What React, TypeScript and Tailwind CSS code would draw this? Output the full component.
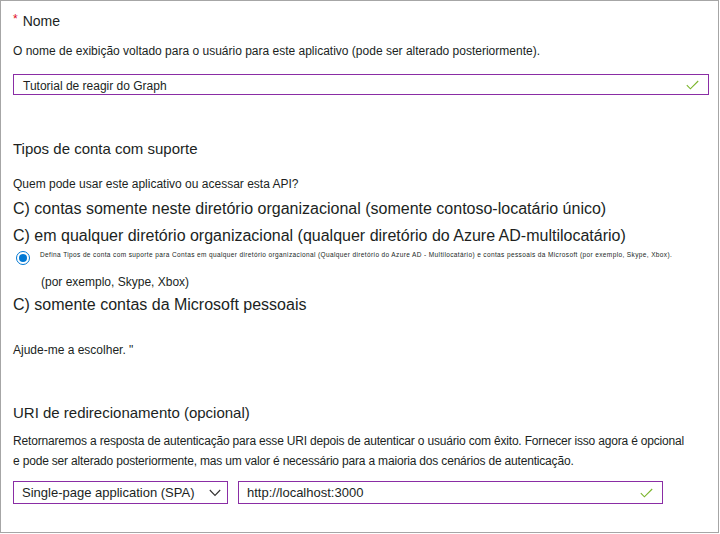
import React from "react";

function Check({ className }: { className?: string }) {
  return (
    <svg className={className} width="13" height="10" viewBox="0 0 13 10" fill="none">
      <path d="M0.8 5.2 L4.4 8.8 L12.2 1" stroke="#7ab42a" strokeWidth="1.1" />
    </svg>
  );
}

function Chevron() {
  return (
    <svg width="12" height="8" viewBox="0 0 12 8" fill="none">
      <path d="M0.8 1 L6 6.4 L11.2 1" stroke="#323130" strokeWidth="1.1" />
    </svg>
  );
}

const ACCOUNT_OPTIONS = [
  "C) contas somente neste diretório organizacional (somente contoso-locatário único)",
  "C) em qualquer diretório organizacional (qualquer diretório do Azure AD-multilocatário)",
];

export default function App() {
  return (
    <div className="h-[534px] w-[720px] bg-white font-['Liberation_Sans',Arial,sans-serif] text-[#201f1e]">
      <div className="h-[533px] w-[719px] border border-[#a6a6a6] pl-[12px]">
        {/* Nome */}
        <div className="mt-[11px] flex items-center text-[14px] leading-[18px]">
          <span className="mr-[5px] -mt-[4px] text-[12px] text-[#e00b1c]">*</span>
          <span>Nome</span>
        </div>
        <p className="mt-[13px] text-[12px] leading-[16px]">
          O nome de exibição voltado para o usuário para este aplicativo (pode ser alterado posteriormente).
        </p>
        <div className="mt-[15px] flex h-[21px] w-[696px] items-center justify-between border border-[#8a2da5] pl-[9px] pr-[9px] text-[12px]">
          <span className="pt-[2px]">Tutorial de reagir do Graph</span>
          <Check />
        </div>

        {/* Tipos de conta */}
        <h2 className="mt-[44px] text-[15px] leading-[20px]">Tipos de conta com suporte</h2>
        <p className="mt-[17px] text-[12px] leading-[16px]">Quem pode usar este aplicativo ou acessar esta API?</p>
        <p className="mt-[4px] text-[16px] leading-[26px]">{ACCOUNT_OPTIONS[0]}</p>
        <p className="text-[16px] leading-[28px]">{ACCOUNT_OPTIONS[1]}</p>
        <div className="flex h-[16px] items-center">
          <span className="ml-[3px] flex h-[14px] w-[14px] shrink-0 items-center justify-center rounded-full border border-[#0078d4]">
            <span className="h-[8px] w-[8px] rounded-full bg-[#0078d4]" />
          </span>
          <span className="ml-[10px] -mt-[6px] whitespace-nowrap text-[6.5px] tracking-[0.38px]">
            Defina Tipos de conta com suporte para Contas em qualquer diretório organizacional (Qualquer diretório do Azure AD - Multilocatário) e contas pessoais da Microsoft (por exemplo, Skype, Xbox).
          </span>
        </div>
        <p className="ml-[28px] mt-[8px] text-[12px] leading-[16px]">(por exemplo, Skype, Xbox)</p>
        <p className="mt-[2px] text-[16px] leading-[26px]">C) somente contas da Microsoft pessoais</p>
        <p className="mt-[24px] text-[12px] leading-[16px]">Ajude-me a escolher. "</p>

        {/* URI */}
        <h2 className="mt-[45px] text-[15px] leading-[20px]">URI de redirecionamento (opcional)</h2>
        <p className="mt-[8px] w-[674px] text-[12px] leading-[20px] tracking-[-0.18px]">
          Retornaremos a resposta de autenticação para esse URI depois de autenticar o usuário com êxito. Fornecer isso agora é opcional e pode ser alterado posteriormente, mas um valor é necessário para a maioria dos cenários de autenticação.
        </p>
        <div className="mt-[10px] flex gap-[10px]">
          <div className="flex h-[23px] w-[215px] items-center justify-between border border-[#8a2da5] pl-[8px] pr-[6px] text-[13px]">
            <span>Single-page application (SPA)</span>
            <Chevron />
          </div>
          <div className="flex h-[23px] w-[425px] items-center justify-between border border-[#8a2da5] pl-[8px] pr-[9px] text-[13px]">
            <span>http://localhost:3000</span>
            <Check />
          </div>
        </div>
      </div>
    </div>
  );
}
